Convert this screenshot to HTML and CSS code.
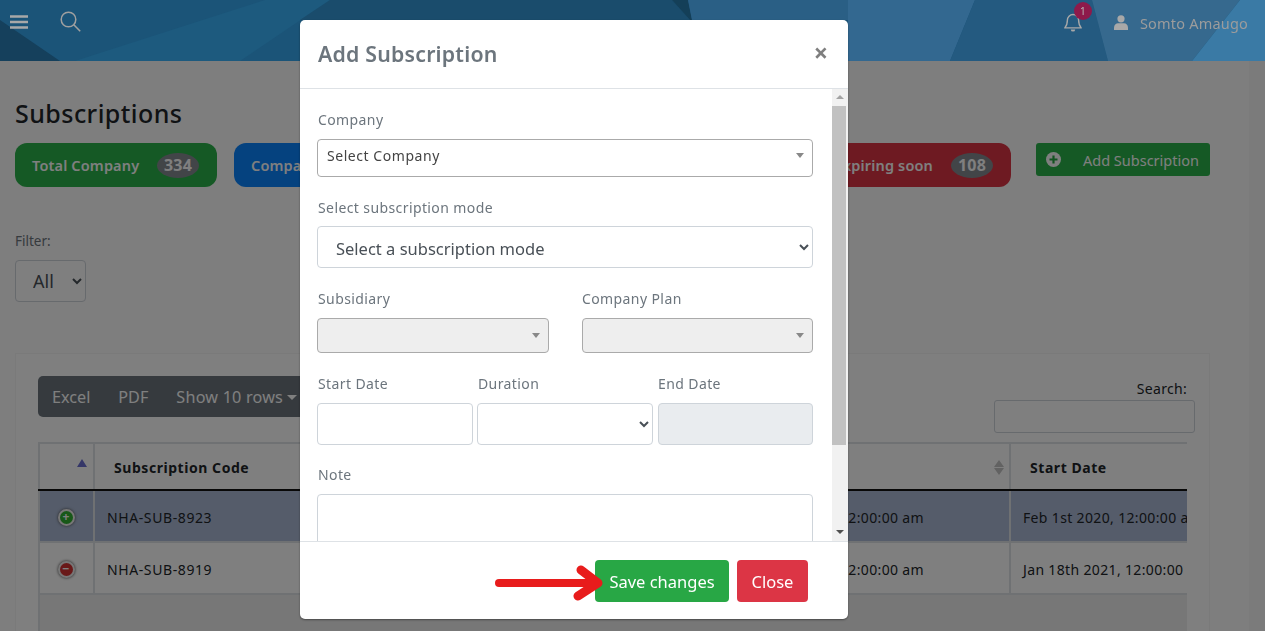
FILE: index.html
```html
<!DOCTYPE html>
<html lang="en">
<head>
<meta charset="utf-8">
<title>Subscriptions</title>
<link rel="stylesheet" href="styles.css">
</head>
<body>
<div class="page">
  <header class="topbar">
    <svg class="topbar-art" viewBox="0 0 1265 61" preserveAspectRatio="none" aria-hidden="true">
      <polygon points="0,0 1265,0 1265,61 0,61" fill="#1b5478"/>
      <polygon points="0,20 60,61 0,61" fill="#15405c"/>
      <polygon points="75,61 265,0 330,0 240,61" fill="#1d5a7e"/>
      <polygon points="330,0 672,0 690,20 300,20" fill="#1a4c6c"/>
      <polygon points="672,0 688,0 692,20 690,20" fill="#143f58"/>
      <polygon points="688,0 860,0 848,20 692,20" fill="#2a5f85"/>
      <polygon points="848,0 975,0 950,61 848,61" fill="#336890"/>
      <polygon points="975,0 1092,0 1108,61 950,61" fill="#245a80"/>
      <polygon points="1092,0 1240,0 1192,61 1108,61" fill="#36698e"/>
      <polygon points="1240,0 1265,0 1265,61 1192,61" fill="#3a7aa5"/>
    </svg>
    <svg class="icon-menu" width="18" height="14" viewBox="0 0 18 14" aria-hidden="true"><path d="M0 1.5h18M0 7h18M0 12.5h18" stroke="#a8a8a8" stroke-width="2.4"/></svg>
    <svg class="icon-search" width="21" height="21" viewBox="0 0 21 21" aria-hidden="true"><circle cx="8.5" cy="8.5" r="7.3" fill="none" stroke="#a0a0a0" stroke-width="1.5"/><path d="M13.8 13.8l6.4 6.4" stroke="#a0a0a0" stroke-width="1.6"/></svg>
    <div class="topbar-spacer"></div>
    <div class="bell">
      <svg width="18" height="20" viewBox="0 0 18 20" aria-hidden="true"><path d="M9 1.5a5.6 5.6 0 0 0-5.6 5.6c0 5-1.4 6.5-2.6 7.8h16.4c-1.2-1.3-2.6-2.8-2.6-7.8A5.6 5.6 0 0 0 9 1.5z" fill="none" stroke="#a8a8a8" stroke-width="1.4" stroke-linejoin="round"/><path d="M6.8 16.4a2.2 2.2 0 0 0 4.4 0z" fill="#a8a8a8"/></svg>
      <span class="bell-badge">1</span>
    </div>
    <svg class="icon-user" width="14" height="15" viewBox="0 0 14 15" aria-hidden="true"><circle cx="7" cy="3.8" r="3.6" fill="#a8a8a8"/><path d="M0 15v-2.4C0 9.8 2 8.2 4 8.2h6c2 0 4 1.6 4 4.4V15z" fill="#a8a8a8"/></svg>
    <span class="username">Somto Amaugo</span>
  </header>

  <div class="workspace">
    <main class="content">
      <h1 class="page-title">Subscriptions</h1>
      <div class="tiles">
        <div class="tile tile-green"><span class="tile-label">Total Company</span><span class="tile-count">334</span></div>
        <div class="tile tile-blue"><span class="tile-label">Company Active</span><span class="tile-count">226</span></div>
        <div class="tile tile-red"><span class="tile-label">Expiring soon</span><span class="tile-count">108</span></div>
        <button class="add-button" type="button">
          <svg width="15" height="15" viewBox="0 0 15 15" aria-hidden="true"><circle cx="7.5" cy="7.5" r="7.5" fill="#fff"/><path d="M7.5 3.5v8M3.5 7.5h8" stroke="#28a745" stroke-width="2.2"/></svg>
          <span>Add Subscription</span>
        </button>
      </div>
      <div class="filter">
        <label class="filter-label" for="filter-select">Filter:</label>
        <select class="filter-select" id="filter-select"><option>All</option></select>
      </div>
      <section class="card">
        <div class="card-tools">
          <div class="btn-group">
            <span class="btn-group-item">Excel</span>
            <span class="btn-group-item">PDF</span>
            <span class="btn-group-item btn-group-rows">Show 10 rows<i class="caret"></i></span>
          </div>
          <div class="search">
            <label class="search-label" for="search-input">Search:</label>
            <input class="search-input" id="search-input" type="text">
          </div>
        </div>
        <div class="table-wrap">
          <table class="data-table">
            <colgroup>
              <col class="col-toggle"><col class="col-code"><col class="col-hidden"><col class="col-date"><col class="col-start">
            </colgroup>
            <thead>
              <tr>
                <th class="th-toggle"><i class="sort-up"></i></th>
                <th>Subscription Code</th>
                <th>Company</th>
                <th class="th-sort">End Date<span class="sort-pair"><i></i><i></i></span></th>
                <th>Start Date</th>
              </tr>
            </thead>
            <tbody>
              <tr class="row-selected">
                <td class="td-toggle"><span class="toggle toggle-plus">+</span></td>
                <td class="td-code">NHA-SUB-8923</td>
                <td>Acme Holdings</td>
                <td class="td-end">Feb 1st 2021, 12:00:00 am</td>
                <td>Feb 1st 2020, 12:00:00 am</td>
              </tr>
              <tr>
                <td class="td-toggle"><span class="toggle toggle-minus">−</span></td>
                <td class="td-code">NHA-SUB-8919</td>
                <td>Acme Holdings</td>
                <td class="td-end">Jan 18th 2022, 12:00:00 am</td>
                <td>Jan 18th 2021, 12:00:00 am</td>
              </tr>
            </tbody>
          </table>
        </div>
      </section>
    </main>
    <div class="page-scrollbar"></div>
  </div>
</div>

<div class="backdrop"></div>

<div class="modal">
  <div class="modal-header">
    <h2 class="modal-title">Add Subscription</h2>
    <span class="modal-close">×</span>
  </div>
  <div class="modal-body">
    <form class="modal-form">
      <div class="field field-company">
        <label class="field-label">Company</label>
        <div class="combo"><span>Select Company</span><i class="combo-arrow"></i></div>
      </div>
      <div class="field field-mode">
        <label class="field-label">Select subscription mode</label>
        <select class="control control-select"><option>Select a subscription mode</option></select>
      </div>
      <div class="form-row form-row-two">
        <div class="field">
          <label class="field-label">Subsidiary</label>
          <div class="combo combo-disabled"><i class="combo-arrow"></i></div>
        </div>
        <div class="field">
          <label class="field-label">Company Plan</label>
          <div class="combo combo-disabled"><i class="combo-arrow"></i></div>
        </div>
      </div>
      <div class="form-row form-row-three">
        <div class="field">
          <label class="field-label">Start Date</label>
          <input class="control" type="text">
        </div>
        <div class="field">
          <label class="field-label">Duration</label>
          <select class="control control-select"><option></option></select>
        </div>
        <div class="field">
          <label class="field-label">End Date</label>
          <input class="control control-readonly" type="text" readonly>
        </div>
      </div>
      <div class="field">
        <label class="field-label">Note</label>
        <textarea class="control control-note"></textarea>
      </div>
    </form>
    <div class="scrollbar">
      <i class="scroll-up"></i>
      <div class="scroll-track"><div class="scroll-thumb"></div></div>
      <i class="scroll-down"></i>
    </div>
  </div>
  <div class="modal-footer">
    <button class="btn btn-save" type="button">Save changes</button>
    <button class="btn btn-close" type="button">Close</button>
    <svg class="annotation" width="112" height="36" viewBox="0 0 112 36" aria-hidden="true">
      <path d="M4 18H100" stroke="#e81c1c" stroke-width="8" stroke-linecap="round" fill="none"/>
      <path d="M86 5l17 13L83 31" stroke="#e81c1c" stroke-width="9" stroke-linecap="round" stroke-linejoin="round" fill="none"/>
    </svg>
  </div>
</div>
</body>
</html>
```

FILE: styles.css
```css
* { box-sizing: border-box; }
html, body { margin: 0; height: 100%; overflow: hidden; }
body { font-family: "Noto Sans", "Open Sans", sans-serif; color: #212529; background: #fff; }
.page { height: 631px; display: flex; flex-direction: column; overflow: hidden; }

/* top bar: painted in its dimmed colours above the backdrop */
.topbar { position: relative; z-index: 2; flex: 0 0 61px; display: flex; align-items: center; padding: 0 17px 0 10px; overflow: hidden; }
.topbar-art { position: absolute; inset: 0; width: 100%; height: 100%; }
.topbar > :not(.topbar-art) { position: relative; }
.icon-menu { margin-top: -17px; }
.icon-search { margin: -19px 0 0 32px; }
.topbar-spacer { flex: 1; }
.bell { width: 18px; height: 20px; margin: -16px 32px 0 0; position: relative; }
.bell svg { display: block; }
.bell-badge { position: absolute; left: 10px; top: -11px; width: 18px; height: 18px; border-radius: 50%; background: #8e1a4b; color: #b8b8b8; font-size: 10px; line-height: 18px; text-align: center; }
.icon-user { margin: -16px 12px 0 0; }
.username { margin-top: -15px; color: #9c9c9c; font-size: 14.5px; letter-spacing: .2px; }

/* page */
.workspace { flex: 1; display: flex; min-height: 0; }
.content { flex: 1; min-width: 0; padding: 33px 39px 0 15px; background: #fcfcfc; }
.page-scrollbar { flex: 0 0 16px; background: #f6f6f6; }
.page-title { margin: 0; font-size: 25px; font-weight: 500; line-height: 38px; letter-spacing: .45px; color: #212529; }
.tiles { display: flex; align-items: flex-start; margin-top: 11px; }
.tile { height: 44px; border-radius: 12px; display: flex; align-items: center; padding: 0 18px 0 17px; color: #fff; font-size: 14.5px; font-weight: 600; letter-spacing: .15px; }
.tile-green { width: 202px; background: #2ab34b; }
.tile-blue { width: 400px; margin-left: 17px; background: #0a84ff; }
.tile-red { width: 360px; margin-left: 17px; background: #dc3545; justify-content: flex-end; }
.tile-count { margin-left: auto; min-width: 42px; height: 25px; line-height: 25px; border-radius: 50%; background: #858a90; text-align: center; font-size: 16px; font-weight: 700; }
.tile-red .tile-count { margin-left: 18px; }
.add-button { margin-left: 25px; flex: 0 0 174px; height: 33px; padding: 0 0 0 10px; display: flex; align-items: center; gap: 22px; border: 0; border-radius: 3px; background: #2ab34b; color: #fff; font: 14.5px "Noto Sans", sans-serif; white-space: nowrap; }
.filter { margin-top: 44px; display: flex; flex-direction: column; align-items: flex-start; }
.filter-label { font-size: 13.5px; line-height: 20px; color: #6c757d; }
.filter-select { margin-top: 9px; width: 71px; height: 42px; padding: 0 0 0 13px; border: 1px solid #ced4da; border-radius: 4px; background: #fff; color: #495057; font: 18px "Noto Sans", sans-serif; }
.card { margin-top: 51px; width: 1195px; height: 300px; padding: 22px 22px 0; background: #fff; border: 1px solid #f5f5f5; margin-right: -39px; }
.card-tools { display: flex; justify-content: space-between; }
.btn-group { height: 41px; display: flex; align-items: center; padding: 0 15px 0 14px; gap: 28px; background: #6c757d; border-radius: 5px; color: #fff; font-size: 16.2px; white-space: nowrap; margin-right: 200px; }
.btn-group-rows { letter-spacing: .2px; }
.caret { display: inline-block; margin-left: 4px; vertical-align: 3px; border: 5px solid transparent; border-top-color: #fff; border-bottom-width: 0; }
.search { display: flex; flex-direction: column; align-items: flex-end; margin: 2px -8px 0 0; }
.search-label { font-size: 14px; line-height: 22px; margin-right: 8px; letter-spacing: .3px; }
.search-input { width: 201px; height: 33px; border: 1px solid #ced4da; border-radius: 3px; background: #fff; }
.table-wrap { width: 1149px; height: 240px; margin-top: 9px; overflow: hidden; background: #eee; border-top: 2px solid #dee2e6; box-shadow: inset 2px 0 0 #dee2e6; }
.data-table { width: 1171px; table-layout: fixed; border-collapse: collapse; background: #fff; font-size: 14px; }
.col-toggle { width: 55px; }
.col-code { width: 246px; }
.col-hidden { width: 350px; }
.col-date { width: 320px; }
.col-start { width: 200px; }
.data-table th { height: 46px; padding: 2px 19px 0; text-align: left; font-weight: 700; white-space: nowrap; letter-spacing: .55px; border: 2px solid #dee2e6; border-top: 0; border-bottom: 2px solid #111; position: relative; }
.data-table td { height: 52px; padding: 2px 12px 0; white-space: nowrap; overflow: hidden; letter-spacing: .35px; color: #212529; border: 2px solid #dee2e6; }
.data-table .td-code { letter-spacing: .6px; }
.row-selected td { background: #aab8d4; }
.data-table .td-end { text-align: right; padding-right: 85px; }
.sort-up { position: absolute; right: 6px; top: 15px; border: 5px solid transparent; border-bottom: 8px solid #6a6fd0; border-top: 0; }
.sort-pair { position: absolute; right: 5px; top: 16px; display: flex; flex-direction: column; gap: 1px; }
.sort-pair i { display: block; border: 5px solid transparent; border-top: 0; border-bottom: 7px solid #c4c4c4; }
.sort-pair i + i { border-bottom: 0; border-top: 7px solid #c4c4c4; }
.data-table .td-toggle { text-align: center; padding: 0 1px 0 0; letter-spacing: 0; }
.toggle { display: inline-block; width: 17px; height: 17px; border-radius: 50%; border: 2px solid #eee; box-shadow: 0 0 3px #444; color: #fff; font-size: 12px; line-height: 12px; font-weight: 700; text-align: center; vertical-align: middle; }
.toggle-plus { background: #31b131; }
.toggle-minus { background: #d33333; }

/* overlay */
.backdrop { position: fixed; inset: 0; z-index: 1; background: rgba(0, 0, 0, .5); }
.modal { position: fixed; left: 300px; top: 20px; z-index: 3; width: 548px; height: 599px; display: flex; flex-direction: column; background: #fff; border-radius: 5px; overflow: hidden; box-shadow: 0 1px 2px rgba(0, 0, 0, .4); }
.modal-header { flex: 0 0 69px; display: flex; align-items: center; justify-content: space-between; padding: 0 20px 1px 18px; border-bottom: 1px solid #dee2e6; }
.modal-title { margin: 0; font-size: 21.3px; font-weight: 600; color: #6c757d; letter-spacing: .2px; }
.modal-close { font-size: 25px; font-weight: 700; line-height: 1; color: #7f7f7f; margin-top: -2px; }
.modal-body { flex: 1; min-height: 0; display: flex; }
.modal-form { flex: 1; min-width: 0; overflow: hidden; padding: 20px 19px 0 17px; display: flex; flex-direction: column; gap: 20px; }
.field { display: flex; flex-direction: column; min-width: 0; }
.field-label { height: 20px; margin: 0 0 0 1px; font-size: 14px; line-height: 20px; color: #6c757d; letter-spacing: .4px; white-space: nowrap; }
.field-company .field-label, .form-row-two .field-label { line-height: 22px; }
.combo { margin-top: 10px; height: 38px; display: flex; align-items: center; justify-content: space-between; padding: 0 8px 6px 9px; border: 1px solid #aaa; border-radius: 4px; background: #fff; color: #444; font-size: 14px; letter-spacing: .55px; }
.combo-arrow { margin-left: auto; border: 4px solid transparent; border-top: 5px solid #888; border-bottom: 0; }
.combo-disabled { height: 35px; background: #eee; padding-bottom: 0; }
.field-mode { margin-top: 1px; }
.field-mode .field-label { margin-bottom: 8px; }
.control { display: block; width: 100%; height: 42px; margin-top: 9px; padding: 0 12px; border: 1px solid #ced4da; border-radius: 4px; background: #fff; color: #495057; font: 16.5px "Noto Sans", sans-serif; }
.field-mode .control { margin-top: 0; padding-top: 2px; }
.control-select { padding-left: 14px; }
.control-readonly { background: #e9ecef; }
.control-note { height: 100px; resize: none; }
.form-row { display: grid; }
.form-row-two { grid-template-columns: 232px 231px; column-gap: 33px; margin-top: 0; }
.form-row-two > :last-child .field-label { margin-left: 0; }
.form-row-three { grid-template-columns: 156px 176px 156px; column-gap: 4px; margin-top: 1px; }
.form-row-three > :last-child { margin-left: 1px; }
.form-row-three > :last-child .field-label { margin-left: 0; }

/* modal scrollbar */
.scrollbar { flex: 0 0 16px; display: flex; flex-direction: column; align-items: center; background: #f1f1f1; }
.scroll-up, .scroll-down { flex: 0 0 auto; width: 0; border-left: 4px solid transparent; border-right: 4px solid transparent; }
.scroll-up { margin: 6px 0 7px; border-bottom: 4px solid #a3a3a3; }
.scroll-down { margin: 6px 0 7px; border-top: 4px solid #505050; }
.scroll-track { flex: 1; width: 100%; }
.scroll-thumb { height: 339px; margin-right: 2px; background: #c1c1c1; }

/* modal footer */
.modal-footer { position: relative; flex: 0 0 78px; display: flex; justify-content: flex-end; align-items: flex-start; gap: 8px; padding: 18px 40px 0 0; border-top: 1px solid #dee2e6; }
.btn { height: 42px; border: 0; border-radius: 4px; color: #fff; font: 16.5px "Noto Sans", sans-serif; white-space: nowrap; }
.btn-save { width: 134px; background: #28a745; }
.btn-close { width: 71px; background: #dc3545; }
.annotation { position: absolute; left: 195px; top: 23px; }
```
